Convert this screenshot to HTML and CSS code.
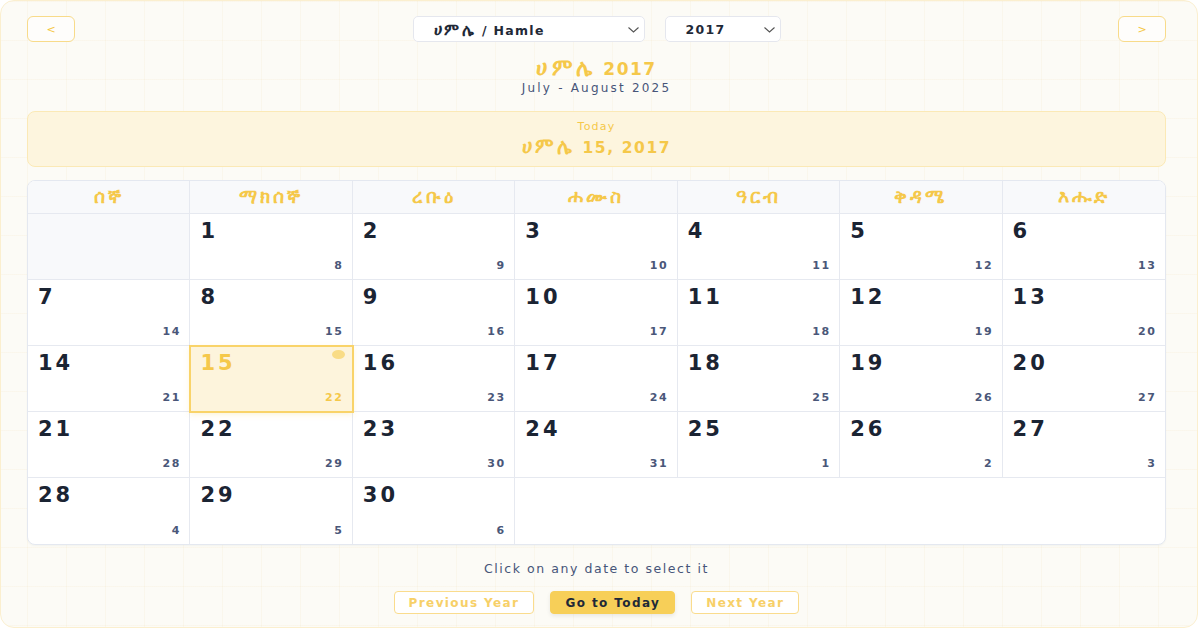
FILE: index.html
```html
<!DOCTYPE html>
<html lang="am">
<head>
<meta charset="utf-8">
<title>Ethiopian Calendar</title>
<link rel="stylesheet" href="styles.css">
</head>
<body>
<div class="page">
  <div class="nav">
    <button class="nav-btn">&lt;</button>
    <div class="selects">
      <div class="select month-select"><span><span class="am">ሀምሌ</span> / Hamle</span><svg class="chev" width="11" height="6" viewBox="0 0 11 6"><polyline points="0.5,0.5 5.5,5 10.5,0.5" fill="none" stroke="#555" stroke-width="1.1"/></svg></div>
      <div class="select year-select"><span>2017</span><svg class="chev" width="11" height="6" viewBox="0 0 11 6"><polyline points="0.5,0.5 5.5,5 10.5,0.5" fill="none" stroke="#555" stroke-width="1.1"/></svg></div>
    </div>
    <button class="nav-btn">&gt;</button>
  </div>

  <div class="heading">
    <div class="title"><span class="am">ሀምሌ</span> 2017</div>
    <div class="subtitle">July - August 2025</div>
  </div>

  <div class="today-box">
    <div class="today-label">Today</div>
    <div class="today-date"><span class="am">ሀምሌ</span> 15, 2017</div>
  </div>

  <div class="calendar">
    <div class="wd"><span class="am">ሰኞ</span></div>
    <div class="wd"><span class="am">ማክሰኞ</span></div>
    <div class="wd"><span class="am">ረቡዕ</span></div>
    <div class="wd"><span class="am">ሐሙስ</span></div>
    <div class="wd"><span class="am">ዓርብ</span></div>
    <div class="wd"><span class="am">ቅዳሜ</span></div>
    <div class="wd last"><span class="am">እሑድ</span></div>

    <div class="day empty"></div>
    <div class="day"><span class="eth">1</span><span class="greg">8</span></div>
    <div class="day"><span class="eth">2</span><span class="greg">9</span></div>
    <div class="day"><span class="eth">3</span><span class="greg">10</span></div>
    <div class="day"><span class="eth">4</span><span class="greg">11</span></div>
    <div class="day"><span class="eth">5</span><span class="greg">12</span></div>
    <div class="day last"><span class="eth">6</span><span class="greg">13</span></div>

    <div class="day"><span class="eth">7</span><span class="greg">14</span></div>
    <div class="day"><span class="eth">8</span><span class="greg">15</span></div>
    <div class="day"><span class="eth">9</span><span class="greg">16</span></div>
    <div class="day"><span class="eth">10</span><span class="greg">17</span></div>
    <div class="day"><span class="eth">11</span><span class="greg">18</span></div>
    <div class="day"><span class="eth">12</span><span class="greg">19</span></div>
    <div class="day last"><span class="eth">13</span><span class="greg">20</span></div>

    <div class="day"><span class="eth">14</span><span class="greg">21</span></div>
    <div class="day today"><span class="eth">15</span><span class="greg">22</span><span class="dot"></span></div>
    <div class="day"><span class="eth">16</span><span class="greg">23</span></div>
    <div class="day"><span class="eth">17</span><span class="greg">24</span></div>
    <div class="day"><span class="eth">18</span><span class="greg">25</span></div>
    <div class="day"><span class="eth">19</span><span class="greg">26</span></div>
    <div class="day last"><span class="eth">20</span><span class="greg">27</span></div>

    <div class="day"><span class="eth">21</span><span class="greg">28</span></div>
    <div class="day"><span class="eth">22</span><span class="greg">29</span></div>
    <div class="day"><span class="eth">23</span><span class="greg">30</span></div>
    <div class="day"><span class="eth">24</span><span class="greg">31</span></div>
    <div class="day"><span class="eth">25</span><span class="greg">1</span></div>
    <div class="day"><span class="eth">26</span><span class="greg">2</span></div>
    <div class="day last"><span class="eth">27</span><span class="greg">3</span></div>

    <div class="day bottom"><span class="eth">28</span><span class="greg">4</span></div>
    <div class="day bottom"><span class="eth">29</span><span class="greg">5</span></div>
    <div class="day bottom"><span class="eth">30</span><span class="greg">6</span></div>
  </div>

  <p class="hint">Click on any date to select it</p>

  <div class="actions">
    <button class="btn outline">Previous Year</button>
    <button class="btn primary">Go to Today</button>
    <button class="btn outline">Next Year</button>
  </div>
</div>
</body>
</html>
```

FILE: styles.css
```css
* { box-sizing: border-box; }

html, body {
  margin: 0;
  padding: 0;
  background: #ffffff;
}

body {
  font-family: "DejaVu Sans", "Noto Sans", sans-serif;
  color: #1e293b;
}

.am {
  font-size: 1.3em;
  letter-spacing: 0.16em;
}

.page {
  width: 1198px;
  height: 628px;
  border: 1px solid #fbefcf;
  border-radius: 14px;
  overflow: hidden;
  padding: 15px 31px 0 26px;
  background-color: #fcfbf6;
  background-image:
    linear-gradient(to right, rgba(240, 226, 190, 0.18) 1px, transparent 1px),
    linear-gradient(to bottom, rgba(240, 226, 190, 0.18) 1px, transparent 1px);
  background-size: 39px 39px;
  background-position: 26px 0;
}

.nav {
  display: flex;
  align-items: center;
  justify-content: space-between;
  height: 26px;
}

.nav-btn {
  width: 48px;
  height: 26px;
  border: 1.5px solid #f8db8a;
  border-radius: 6px;
  background: #fefdfb;
  color: #f5c63f;
  font-family: "DejaVu Sans", sans-serif;
  font-size: 11px;
  padding: 0;
}

.selects {
  display: flex;
  gap: 20px;
}

.select {
  position: relative;
  height: 26px;
  border: 1px solid #e5e7ee;
  border-radius: 5px;
  background: #ffffff;
  display: flex;
  align-items: center;
  font-size: 12.5px;
  font-weight: 700;
  color: #1f2937;
  letter-spacing: 1.3px;
}

.month-select {
  width: 232px;
  padding-left: 20px;
}

.year-select {
  width: 116px;
  padding-left: 20px;
}

.chev {
  position: absolute;
  right: 5px;
  top: 10px;
}

.heading {
  text-align: center;
  margin-top: 14px;
}

.title {
  font-size: 17px;
  font-weight: 700;
  color: #f5c84a;
  line-height: 22px;
  letter-spacing: 1.5px;
}

.subtitle {
  font-size: 12px;
  color: #475579;
  line-height: 16px;
  margin-top: 0;
  letter-spacing: 2.2px;
}

.today-box {
  margin-top: 15px;
  height: 56px;
  border: 1px solid #fbe9b6;
  border-radius: 8px;
  background: #fdf5de;
  text-align: center;
  padding-top: 7px;
}

.today-label {
  font-size: 11px;
  color: #f5c84a;
  line-height: 15px;
  letter-spacing: 1.2px;
}

.today-date {
  font-size: 15.5px;
  font-weight: 700;
  color: #f5c84a;
  line-height: 22px;
  margin-top: 1px;
  letter-spacing: 1.6px;
}

.calendar {
  margin-top: 13px;
  display: grid;
  grid-template-columns: repeat(7, 1fr);
  grid-template-rows: 33px repeat(5, 66px);
  border: 1px solid #e4e8f0;
  border-radius: 8px;
  overflow: hidden;
  background: #ffffff;
  box-shadow: 0 1px 2px rgba(30, 41, 59, 0.04);
}

.wd {
  background: #f8f9fb;
  color: #f5c84a;
  font-size: 14.5px;
  font-weight: 700;
  text-align: center;
  line-height: 32px;
  border-right: 1px solid #e6e9f0;
  border-bottom: 1px solid #e6e9f0;
}

.wd.last, .day.last { border-right: none; }

.day {
  position: relative;
  border-right: 1px solid #e6e9f0;
  border-bottom: 1px solid #e6e9f0;
  padding: 4px 10px 6px 10px;
  display: flex;
  flex-direction: column;
  justify-content: space-between;
}

.day.bottom { border-bottom: none; }

.day.empty { background: #f8f9fb; }

.eth {
  font-size: 21px;
  font-weight: 700;
  line-height: 27px;
  color: #1b2433;
  letter-spacing: 3px;
}

.greg {
  align-self: flex-end;
  font-size: 11px;
  font-weight: 700;
  color: #4a5779;
  line-height: 14px;
  letter-spacing: 1.6px;
  margin-right: -1.6px;
}

.day.today {
  background: #fdf4dc;
  outline: 2px solid #f9d369;
  outline-offset: -1px;
  z-index: 1;
  box-shadow: 0 2px 6px rgba(245, 200, 74, 0.25);
}

.day.today .eth,
.day.today .greg { color: #f5c84a; }

.dot {
  position: absolute;
  top: 4px;
  right: 7px;
  width: 13px;
  height: 9px;
  border-radius: 50%;
  background: #f9dc86;
}

.hint {
  margin: 17px 0 0;
  text-align: center;
  font-size: 12.5px;
  color: #475579;
  line-height: 14px;
  letter-spacing: 1.55px;
}

.actions {
  display: flex;
  justify-content: center;
  gap: 16px;
  margin-top: 15px;
}

.btn {
  height: 23px;
  border-radius: 4px;
  font-family: "DejaVu Sans", sans-serif;
  font-size: 12px;
  font-weight: 700;
  letter-spacing: 1.4px;
  padding: 0 14px;
}

.btn.outline {
  background: #ffffff;
  border: 1.5px solid #fadc8d;
  color: #f7d068;
}

.btn.primary {
  background: #f7cf58;
  border: 1px solid #f7cf58;
  color: #1f2937;
  box-shadow: 0 2px 4px rgba(0, 0, 0, 0.08);
}
```
